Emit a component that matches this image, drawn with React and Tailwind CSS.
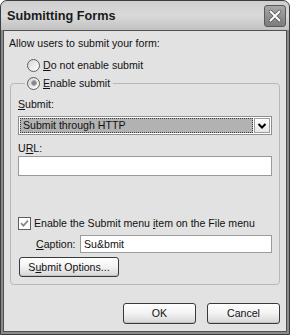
import React from "react";

function Radio({ checked }) {
  return (
    <span className="relative w-[13px] h-[13px] rounded-full border border-[#5e5e5e] bg-linear-to-br from-[#d6d6d6] to-white flex items-center justify-center shrink-0">
      {checked && <span className="w-[6px] h-[6px] rounded-full bg-[#858585] border border-[#a8a8a8]" />}
    </span>
  );
}

function Check() {
  return (
    <span className="w-[13px] h-[13px] border border-[#5e5e5e] bg-white flex items-center justify-center shrink-0">
      <svg width="9" height="9" viewBox="0 0 9 9">
        <path d="M1 4.2 L3.4 6.6 L8 1.6" fill="none" stroke="#8a8a8a" strokeWidth="1.8" />
      </svg>
    </span>
  );
}

function Btn({ children, className }) {
  return (
    <div className={"flex items-center justify-center rounded-[3px] border border-[#3a3a3a] bg-linear-to-b from-white via-[#f2f2f2] to-[#d6d6d6] shadow-[inset_0_-1px_0_#c2c2c2] " + className}>
      {children}
    </div>
  );
}

export default function App() {
  return (
    <div className="w-[290px] h-[335px] bg-[#8a8a8a] border border-[#3c3c3c] rounded-t-[7px] flex flex-col overflow-hidden font-['Liberation_Sans',Arial,sans-serif] text-[10.6px] leading-[13px] text-[#111]">
      <div className="h-[29px] shrink-0 flex items-center justify-between pl-[6px] pr-[3px] bg-linear-to-b from-[#cfcfcf] via-[#d9d9d9] to-[#c2c2c2]">
        <span className="font-bold text-[12.7px] leading-[16px] text-[#1a1a1a] pt-[1px]">Submitting Forms</span>
        <div className="w-[22px] h-[22px] rounded-[3px] border border-[#5a5a5a] bg-linear-to-b from-[#a8a8a8] to-[#7c7c7c] flex items-center justify-center">
          <svg width="14" height="14" viewBox="0 0 14 14">
            <path d="M2.5 2.5 L11.5 11.5 M11.5 2.5 L2.5 11.5" stroke="#555" strokeWidth="3.4" strokeLinecap="round" />
            <path d="M2.5 2.5 L11.5 11.5 M11.5 2.5 L2.5 11.5" stroke="#fff" strokeWidth="2" strokeLinecap="round" />
          </svg>
        </div>
      </div>
      <div className="flex-1 mx-[2px] mb-[2px] bg-[#e2e2e2] border border-[#505050] flex flex-col">
        <div className="pl-[5px] pt-[6px] h-[19px]">Allow users to submit your form:</div>
        <div className="mt-[8px] ml-[23px] h-[14px] flex items-center gap-[3px]">
          <Radio />
          <span><span className="underline">D</span>o not enable submit</span>
        </div>
        <fieldset className="mt-[4px] mx-[6px] border border-[#b8b8b8] rounded-[4px] px-[7px] pb-[7px]">
          <legend className="ml-[7px] px-[2px] h-[14px]">
            <span className="flex items-center gap-[3px] h-[14px] pr-[1px]">
              <Radio checked />
              <span><span className="underline">E</span>nable submit</span>
            </span>
          </legend>
          <div className="mt-[8px] h-[13px]"><span className="underline">S</span>ubmit:</div>
          <div className="mt-[5px] h-[19px] border border-[#8e8e8e] bg-white p-px flex">
            <div className="flex-1 bg-[#b2b2b2] border border-dotted border-[#3a3a3a] flex items-center pl-[2px]">Submit through HTTP</div>
            <div className="w-[16px] ml-px border border-[#9e9e9e] bg-linear-to-b from-white to-[#e6e6e6] flex items-center justify-center">
              <svg width="10" height="8" viewBox="0 0 10 8">
                <path d="M1.5 2 L5 5.5 L8.5 2" fill="none" stroke="#000" strokeWidth="2" />
              </svg>
            </div>
          </div>
          <div className="mt-[7px] h-[13px]">U<span className="underline">R</span>L:</div>
          <div className="mt-px h-[20px] border border-[#9a9a9a] bg-white" />
          <div className="mt-[40px] h-[14px] flex items-center gap-[3px]">
            <Check />
            <span>Enable the Submit menu <span className="underline">i</span>tem on the File menu</span>
          </div>
          <div className="mt-[5px] h-[18px] flex items-center">
            <span className="ml-[18px]"><span className="underline">C</span>aption:</span>
            <div className="ml-auto w-[192px] h-[18px] border border-[#9a9a9a] bg-white flex items-center pl-[3px]">Su&amp;bmit</div>
          </div>
          <Btn className="mt-[4px] ml-px w-[100px] h-[20px]">
            <span>S<span className="underline">u</span>bmit Options...</span>
          </Btn>
        </fieldset>
        <div className="mt-[18px] pr-[6px] flex justify-end gap-[11px]">
          <Btn className="w-[73px] h-[21px]">OK</Btn>
          <Btn className="w-[73px] h-[21px]">Cancel</Btn>
        </div>
      </div>
    </div>
  );
}
